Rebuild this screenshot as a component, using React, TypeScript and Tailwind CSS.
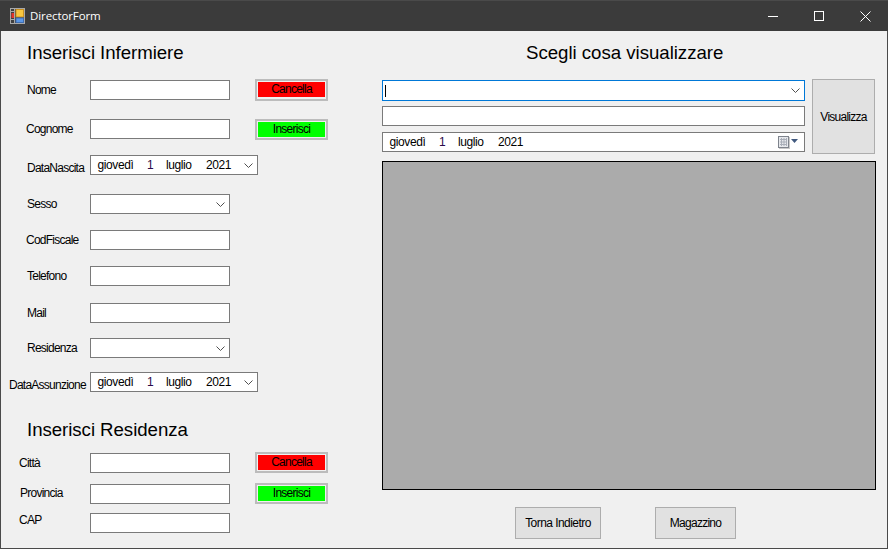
import React from 'react';

const Chevron = () => (
  <svg width="9" height="5" viewBox="0 0 9 5" fill="none" stroke="#505050" strokeWidth="1" className="shrink-0">
    <path d="M0.5 0.5 L4.5 4.5 L8.5 0.5" />
  </svg>
);

const TextBox = ({ className = 'w-[140px]' }: { className?: string }) => (
  <input readOnly className={`h-5 block bg-white border border-[#7a7a7a] outline-none ${className}`} />
);

const ComboBox = () => (
  <div className="h-5 w-[140px] bg-white border border-[#7a7a7a] flex items-center justify-end pr-[4px]">
    <Chevron />
  </div>
);

const DateText = () => (
  <>
    <span className="w-[49.5px]">giovedì</span>
    <span className="w-[19px] text-[#2b0a4a]">1</span>
    <span className="w-[40px]">luglio</span>
    <span>2021</span>
  </>
);

const DatePicker = () => (
  <div className="h-5 w-[168px] bg-white border border-[#7a7a7a] flex items-center pl-[6.5px] pr-[4px] tracking-[-0.4px]">
    <DateText />
    <span className="ml-auto">
      <Chevron />
    </span>
  </div>
);

const ActionButton = ({ label, fill, className }: { label: string; fill: string; className: string }) => (
  <button className={`ml-[25px] w-[73px] border-2 border-[#bcbcbc] bg-[#f0f0f0] flex items-start justify-center p-px ${className}`}>
    <span className={`w-full h-[15px] leading-[15px] ${fill}`}>{label}</span>
  </button>
);

interface RowProps {
  label: string;
  mt: string;
  pad: string;
  children: React.ReactNode;
}

const Row = ({ label, mt, pad, children }: RowProps) => (
  <div className={`flex h-5 ${mt}`}>
    <label className={`w-[89px] h-5 flex items-center whitespace-nowrap ${pad}`}>{label}</label>
    {children}
  </div>
);

const GrayButton = ({ label, className }: { label: string; className: string }) => (
  <button className={`border-[1.5px] border-[#adadad] bg-[#e1e1e1] ${className}`}>{label}</button>
);

const App: React.FC = () => {
  return (
    <div className="w-[888px] h-[549px] flex flex-col bg-[#f0f0f0] text-black text-[12px] tracking-[-0.75px] overflow-hidden" style={{ fontFamily: '"Liberation Sans", Arial, sans-serif' }}>
      {/* title bar */}
      <div className="h-[31px] shrink-0 bg-[#3b3b3b] border-t border-[#4a4a4a] flex items-center text-white">
        <svg width="15" height="16" viewBox="0 0 15 16" className="ml-[10px]">
          <rect x="0.5" y="0.5" width="14" height="15" fill="#3f3f3f" stroke="#a8a8a8" />
          <path d="M0.5 3.5 H5 M4.5 0.5 V15.5 M0.5 11.5 H5" stroke="#a8a8a8" />
          <rect x="6" y="1.5" width="7.5" height="7.5" fill="#f7c740" stroke="#c98f1e" />
          <rect x="1.5" y="5" width="2.5" height="5" fill="#e0352b" />
          <rect x="6" y="10" width="7.5" height="4.5" fill="#5b97e6" stroke="#3f6db0" />
        </svg>
        <span className="ml-[5px] text-[11.5px] tracking-[-0.1px]" style={{ fontFamily: '"Open Sans", sans-serif' }}>DirectorForm</span>
        <div className="ml-auto flex h-full">
          <div className="w-[46px] flex items-center justify-center">
            <svg width="10" height="10" viewBox="0 0 10 10" stroke="#fff" fill="none"><path d="M0 5.5 H10" /></svg>
          </div>
          <div className="w-[46px] flex items-center justify-center">
            <svg width="10" height="10" viewBox="0 0 10 10" stroke="#fff" fill="none"><rect x="0.5" y="0.5" width="9" height="9" /></svg>
          </div>
          <div className="w-[46px] flex items-center justify-center">
            <svg width="11" height="11" viewBox="0 0 11 11" stroke="#fff" fill="none"><path d="M0.5 0.5 L10.5 10.5 M10.5 0.5 L0.5 10.5" /></svg>
          </div>
        </div>
      </div>

      <div className="flex-1 flex border-x border-b border-[#4a4a4a]">
        {/* left column */}
        <div className="w-[381px] shrink-0">
          <h2 className="mt-[11px] ml-[26px] h-[22px] leading-[22px] text-[18.67px] tracking-[-0.05px]">Inserisci Infermiere</h2>
          <Row label="Nome" mt="mt-[16px]" pad="pl-[26px]">
            <TextBox />
            <ActionButton label="Cancella" fill="bg-[#ff0000]" className="h-[22px] -mt-px" />
          </Row>
          <Row label="Cognome" mt="mt-[19px]" pad="pl-[25px]">
            <TextBox />
            <ActionButton label="Inserisci" fill="bg-[#00ff00]" className="h-[21px]" />
          </Row>
          <Row label="DataNascita" mt="mt-[16px]" pad="pl-[26px] pt-[6px]">
            <DatePicker />
          </Row>
          <Row label="Sesso" mt="mt-[19px]" pad="pl-[26px]"><ComboBox /></Row>
          <Row label="CodFiscale" mt="mt-[16px]" pad="pl-[25px]"><TextBox /></Row>
          <Row label="Telefono" mt="mt-[16px]" pad="pl-[26px]"><TextBox /></Row>
          <Row label="Mail" mt="mt-[17px]" pad="pl-[26px]"><TextBox /></Row>
          <Row label="Residenza" mt="mt-[15px]" pad="pl-[26px]"><ComboBox /></Row>
          <Row label="DataAssunzione" mt="mt-[14px]" pad="pl-[8px] pt-[6px]">
            <DatePicker />
          </Row>
          <h2 className="mt-[26px] ml-[26px] h-[22px] leading-[24px] text-[18.67px] tracking-[-0.05px]">Inserisci Residenza</h2>
          <Row label="Città" mt="mt-[13px]" pad="pl-[18px]">
            <TextBox />
            <ActionButton label="Cancella" fill="bg-[#ff0000]" className="h-[21px] -mt-px" />
          </Row>
          <Row label="Provincia" mt="mt-[11px]" pad="pl-[19px] pb-[2px]">
            <TextBox />
            <ActionButton label="Inserisci" fill="bg-[#00ff00]" className="h-[21px] -mt-px" />
          </Row>
          <Row label="CAP" mt="mt-[9px]" pad="pl-[18px] pb-[6px]"><TextBox /></Row>
        </div>

        {/* right column */}
        <div className="flex-1">
          <h2 className="mt-[11px] ml-[144px] h-[22px] leading-[22px] text-[18.67px] tracking-[-0.03px]">Scegli cosa visualizzare</h2>
          <div className="mt-[15px] flex items-start">
            <div className="w-[423px] mt-px">
              <div className="h-[21px] bg-white border border-[#0078d7] flex items-center justify-end pr-[4px] pl-[2px]">
                <span className="w-px h-3 bg-black mr-auto" />
                <Chevron />
              </div>
              <TextBox className="w-full mt-[5px]" />
              <div className="mt-[6px] h-5 bg-white border border-[#7a7a7a] flex items-center pl-[6.5px] pr-[6px] tracking-[-0.4px]">
                <DateText />
                <svg width="20" height="13" viewBox="0 0 20 13" className="ml-auto">
                  <rect x="1" y="1" width="11" height="12" fill="#c9c9c9" />
                  <rect x="0.5" y="0.5" width="10" height="11" fill="#e6e8ec" stroke="#7e838c" />
                  <path d="M2 3.5 H9 M2 6 H9 M2 8.5 H9 M3.5 2 V10 M6 2 V10 M8.5 2 V10" stroke="#a9aeb8" strokeWidth="1" />
                  <path d="M13 3 H20 L16.5 7 Z" fill="#41597f" />
                </svg>
              </div>
            </div>
            <GrayButton label="Visualizza" className="ml-[7px] w-[63px] h-[75px]" />
          </div>
          <div className="mt-[7px] w-[494px] h-[329px] bg-[#ababab] border border-black" />
          <div className="mt-[17px] flex">
            <GrayButton label="Torna Indietro" className="ml-[133px] w-[86px] h-[32px] tracking-[-0.55px]" />
            <GrayButton label="Magazzino" className="ml-[54px] w-[81px] h-[32px]" />
          </div>
        </div>
      </div>
    </div>
  );
};

export default App;
